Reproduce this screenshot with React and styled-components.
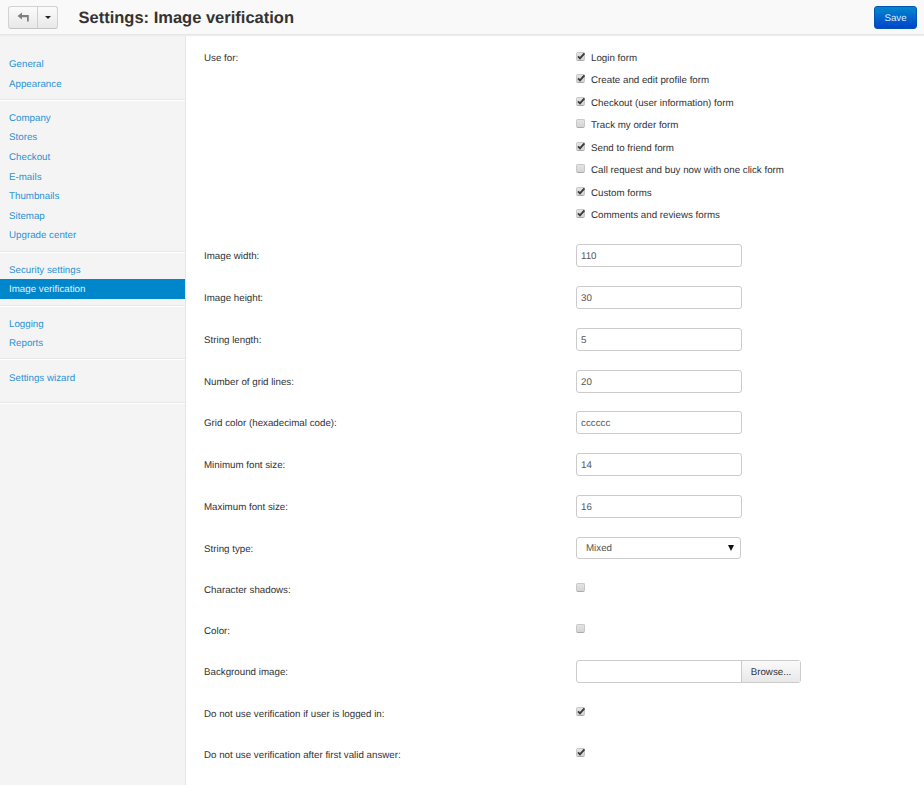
import React from 'react'
import styled, { createGlobalStyle } from 'styled-components'

const GlobalStyle = createGlobalStyle`
	html, body {
		margin: 0;
		padding: 0;
		background: #fff;
	}
	body {
		font-family: "Liberation Sans", Arial, sans-serif;
		font-size: 9.75px;
		color: #333;
		text-rendering: geometricPrecision;
	}
`
const Page = styled.div`
	width: 924px;
	height: 785px;
	overflow: hidden;
	display: flex;
	flex-direction: column;
`
const Toolbar = styled.header`
	flex: none;
	height: 34px;
	display: flex;
	align-items: center;
	background: #f9f9f9;
	border-bottom: 1px solid #e6e6e6;
	box-shadow: 0 1px 1px #eee;
	position: relative;
	padding: 0 7px 0 8px;
`
const BtnGroup = styled.div`
	display: flex;
	height: 23px;
	border: 1px solid #d2d2d2;
	border-bottom-color: #c4c4c4;
	border-radius: 3px;
	background: linear-gradient(to bottom, #fbfbfb, #e8e8e8);
	box-sizing: border-box;
`
const GroupBtn = styled.div`
	width: ${props => props.$w}px;
	display: flex;
	align-items: center;
	justify-content: center;
	& + & {
		border-left: 1px solid #cfcfcf;
	}
`
const Title = styled.h1`
	margin: 0 0 0 20.5px;
	font-size: 16.5px;
	font-weight: bold;
	line-height: 34px;
	padding-top: 1px;
	color: #333;
	flex: 1;
`
const SaveButton = styled.div`
	width: 43px;
	height: 23px;
	box-sizing: border-box;
	border: 1px solid #0055b3;
	border-radius: 3px;
	background: linear-gradient(to bottom, #0088cc, #0044cc);
	color: #dfe9f8;
	display: flex;
	align-items: center;
	justify-content: center;
	margin-top: 1px;
	padding-top: 1px;
`
const Body = styled.div`
	flex: 1;
	display: flex;
	min-height: 0;
`
const Sidebar = styled.nav`
	flex: none;
	width: 185px;
	background: #f4f4f4;
	border-right: 1px solid #e6e6e6;
	padding-top: 19px;
`
const SideGroup = styled.div`
	padding: ${props => (props.$first ? '0' : props.$last ? '9px' : '8px')} 0 ${props => (props.$last ? '13.5px' : '5.7px')};
	border-bottom: 1px solid #e8e8e8;
	box-shadow: 0 1px 0 #fff;
`
const SideItem = styled.div`
	height: 19.6px;
	line-height: 21px;
	padding-left: 9px;
	color: ${props => (props.$active ? '#e4f1f9' : '#2b93d5')};
	background: ${props => (props.$active ? '#0087cb' : 'transparent')};
`
const Content = styled.main`
	flex: 1;
	padding: 11px 0 0 18px;
`
const CheckRow = styled.div`
	display: grid;
	grid-template-columns: 372px 1fr;
	margin-bottom: 9.1px;
`
const Row = styled.div`
	display: grid;
	grid-template-columns: 372px 1fr;
	align-items: center;
	height: ${props => props.$h || 41.8}px;
`
const Label = styled.div`
	line-height: 22px;
	margin-top: 3px;
`
const UseForLabel = styled(Label)`
	margin-top: 1.5px;
`
const CheckList = styled.div`
	display: flex;
	flex-direction: column;
	padding-top: 0.3px;
`
const CheckItem = styled.div`
	height: 22.43px;
	display: flex;
	align-items: center;
`
const BoxWrap = styled.span`
	flex: none;
	width: 9px;
	height: 9px;
	border: 1px solid #c8c8c8;
	border-bottom-color: #aaa;
	border-radius: 2px;
	box-sizing: border-box;
	background: linear-gradient(to bottom, #e4e4e4, #d4d4d4);
	position: relative;
	display: block;
	margin-top: ${props => props.$top || 0}px;
`
const Tick = styled.svg`
	position: absolute;
	left: -1px;
	top: -2px;
	width: 10px;
	height: 10px;
`
const CheckText = styled.span`
	margin-left: 6px;
	padding-top: 2px;
`
const TextInput = styled.div`
	width: 166px;
	height: 23px;
	box-sizing: border-box;
	border: 1px solid #cbcbcb;
	border-radius: 3px;
	padding: 1px 0 0 4px;
	line-height: 21px;
	color: #555;
	background: #fff;
`
const SelectBox = styled.div`
	width: 165px;
	height: 22px;
	box-sizing: border-box;
	border: 1px solid #cbcbcb;
	border-radius: 3px;
	padding: 0 6px 0 9px;
	display: flex;
	align-items: center;
	justify-content: space-between;
	color: #555;
	background: #fff;
`
const FileGroup = styled.div`
	display: flex;
	width: 225px;
	height: 23px;
	box-sizing: border-box;
	border: 1px solid #cbcbcb;
	border-radius: 3px;
`
const FileField = styled.div`
	flex: 1;
`
const BrowseButton = styled.div`
	width: 59px;
	box-sizing: border-box;
	padding-top: 1px;
	border-left: 1px solid #cbcbcb;
	background: linear-gradient(to bottom, #fafafa, #e8e8e8);
	display: flex;
	align-items: center;
	justify-content: center;
	color: #333;
`

const Checkbox = ({ checked, top }) => (
	<BoxWrap $top={top}>
		{checked && (
			<Tick viewBox="0 0 10 10">
				<path d="M2 5.4 L4 7.4 L8.4 2.4" fill="none" stroke="#3c3c3c" strokeWidth="1.9" />
			</Tick>
		)}
	</BoxWrap>
)

const sideGroups = [
	['General', 'Appearance'],
	['Company', 'Stores', 'Checkout', 'E-mails', 'Thumbnails', 'Sitemap', 'Upgrade center'],
	['Security settings', 'Image verification'],
	['Logging', 'Reports'],
	['Settings wizard'],
]

const useFor = [
	['Login form', true],
	['Create and edit profile form', true],
	['Checkout (user information) form', true],
	['Track my order form', false],
	['Send to friend form', true],
	['Call request and buy now with one click form', false],
	['Custom forms', true],
	['Comments and reviews forms', true],
]

const inputs = [
	['Image width:', '110'],
	['Image height:', '30'],
	['String length:', '5'],
	['Number of grid lines:', '20'],
	['Grid color (hexadecimal code):', 'cccccc'],
	['Minimum font size:', '14'],
	['Maximum font size:', '16'],
]

const App = () => (
	<Page>
		<GlobalStyle />
		<Toolbar>
			<BtnGroup>
				<GroupBtn $w={28}>
					<svg width="12" height="10" viewBox="0 0 12 10">
						<path d="M5 0.5 L0.5 4 L5 7.5 V5.2 H10 V9.5 H11.8 V3 H5 Z" fill="#808080" />
					</svg>
				</GroupBtn>
				<GroupBtn $w={19}>
					<svg width="6" height="3" viewBox="0 0 6 3">
						<path d="M0 0 H6 L3 3 Z" fill="#222" />
					</svg>
				</GroupBtn>
			</BtnGroup>
			<Title>Settings: Image verification</Title>
			<SaveButton>Save</SaveButton>
		</Toolbar>
		<Body>
			<Sidebar>
				{sideGroups.map((group, i) => (
					<SideGroup key={i} $first={i === 0} $last={i === sideGroups.length - 1}>
						{group.map(item => (
							<SideItem key={item} $active={item === 'Image verification'}>{item}</SideItem>
						))}
					</SideGroup>
				))}
			</Sidebar>
			<Content>
				<CheckRow>
					<UseForLabel>Use for:</UseForLabel>
					<CheckList>
						{useFor.map(([text, checked]) => (
							<CheckItem key={text}>
								<Checkbox checked={checked} top={-2} />
								<CheckText>{text}</CheckText>
							</CheckItem>
						))}
					</CheckList>
				</CheckRow>
				{inputs.map(([label, value]) => (
					<Row key={label}>
						<Label>{label}</Label>
						<TextInput>{value}</TextInput>
					</Row>
				))}
				<Row>
					<Label>String type:</Label>
					<SelectBox>
						Mixed
						<svg width="6" height="6" viewBox="0 0 6 6">
							<path d="M0 0 H6 L3 6 Z" fill="#111" />
						</svg>
					</SelectBox>
				</Row>
				<Row $h={41}>
					<Label>Character shadows:</Label>
					<Checkbox top={-4} />
				</Row>
				<Row $h={40.6}>
					<Label>Color:</Label>
					<Checkbox top={-4} />
				</Row>
				<Row $h={42.2}>
					<Label>Background image:</Label>
					<FileGroup>
						<FileField />
						<BrowseButton>Browse...</BrowseButton>
					</FileGroup>
				</Row>
				<Row $h={41}>
					<Label>Do not use verification if user is logged in:</Label>
					<Checkbox checked top={-4} />
				</Row>
				<Row $h={41}>
					<Label>Do not use verification after first valid answer:</Label>
					<Checkbox checked top={-4} />
				</Row>
			</Content>
		</Body>
	</Page>
)

export default App
